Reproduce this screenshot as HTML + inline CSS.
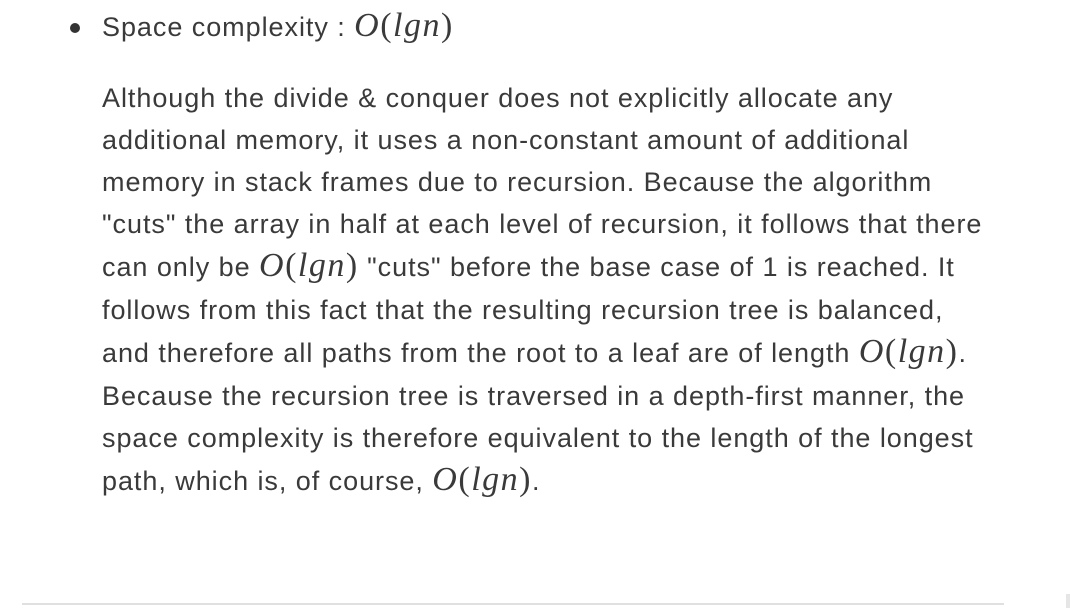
<!DOCTYPE html>
<html><head><meta charset="utf-8"><style>
body{margin:0;width:1070px;height:608px;background:#fff;position:relative;overflow:hidden;font-family:"Liberation Sans",sans-serif;color:#3a3a3a;font-size:27px;letter-spacing:0.95px}
.l{position:absolute;left:102px;height:42px;line-height:42px;white-space:nowrap}
.m{font-family:"Liberation Serif",serif;font-style:italic;font-size:34px;letter-spacing:1.5px}
.m .u{font-style:normal}
</style></head><body>
<div style="position:absolute;left:70px;top:23px;width:10px;height:10px;border-radius:50%;background:#333"></div>
<div class="l" style="top:5px">Space complexity : <span class="m">O<span class="u">(</span>lgn<span class="u">)</span></span></div>
<div class="l" style="top:77px">Although the divide &amp; conquer does not explicitly allocate any</div>
<div class="l" style="top:119px">additional memory, it uses a non-constant amount of additional</div>
<div class="l" style="top:161px">memory in stack frames due to recursion. Because the algorithm</div>
<div class="l" style="top:203px">"cuts" the array in half at each level of recursion, it follows that there</div>
<div class="l" style="top:245px">can only be <span class="m">O<span class="u">(</span>lgn<span class="u">)</span></span> "cuts" before the base case of 1 is reached. It</div>
<div class="l" style="top:289px">follows from this fact that the resulting recursion tree is balanced,</div>
<div class="l" style="top:331px">and therefore all paths from the root to a leaf are of length <span class="m">O<span class="u">(</span>lgn<span class="u">)</span></span>.</div>
<div class="l" style="top:375px">Because the recursion tree is traversed in a depth-first manner, the</div>
<div class="l" style="top:417px">space complexity is therefore equivalent to the length of the longest</div>
<div class="l" style="top:459px">path, which is, of course, <span class="m">O<span class="u">(</span>lgn<span class="u">)</span></span>.</div>
<div style="position:absolute;left:22px;top:603px;width:982px;height:2px;background:#e0e0e0"></div>
<div style="position:absolute;left:1066px;top:594px;width:4px;height:14px;background:#e6e6e6"></div>
</body></html>
